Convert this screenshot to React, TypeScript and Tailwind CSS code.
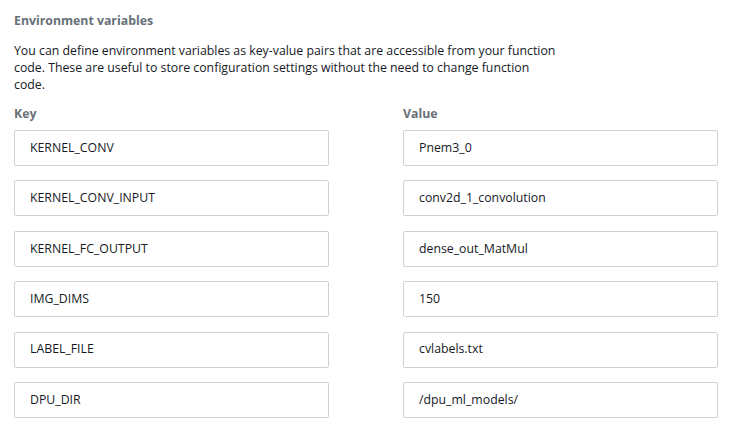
const vars = [
  { key: 'KERNEL_CONV', value: 'Pnem3_0' },
  { key: 'KERNEL_CONV_INPUT', value: 'conv2d_1_convolution' },
  { key: 'KERNEL_FC_OUTPUT', value: 'dense_out_MatMul' },
  { key: 'IMG_DIMS', value: '150' },
  { key: 'LABEL_FILE', value: 'cvlabels.txt' },
  { key: 'DPU_DIR', value: '/dpu_ml_models/' },
]

function Field({ text }: { text: string }) {
  return (
    <div className="h-[36px] w-[315px] rounded-[2px] border border-[#cfd2d4] bg-white px-[15px] flex items-center text-[12.3px] text-[#16191f]">
      {text}
    </div>
  )
}

export default function App() {
  return (
    <div className="min-h-[428px] bg-white pl-[14px] pt-[12px] font-['Open_Sans',sans-serif]">
      <h3 className="text-[12.3px] font-bold leading-[17px] text-[#687078]">Environment variables</h3>
      <p className="mt-[13px] text-[12.3px] leading-[17px] text-[#16191f]">
        <span className="block">You can define environment variables as key-value pairs that are accessible from your function</span>
        <span className="block">code. These are useful to store configuration settings without the need to change function</span>
        <span className="block">code.</span>
      </p>
      <div className="mt-[12px] flex gap-[74px]">
        <div className="flex flex-col">
          <div className="text-[12.3px] font-bold leading-[17px] text-[#687078] mb-[8px]">Key</div>
          <div className="flex flex-col gap-[14.4px]">
            {vars.map((v) => (
              <Field key={v.key} text={v.key} />
            ))}
          </div>
        </div>
        <div className="flex flex-col">
          <div className="text-[12.3px] font-bold leading-[17px] text-[#687078] mb-[8px]">Value</div>
          <div className="flex flex-col gap-[14.4px]">
            {vars.map((v) => (
              <Field key={v.key} text={v.value} />
            ))}
          </div>
        </div>
      </div>
    </div>
  )
}
